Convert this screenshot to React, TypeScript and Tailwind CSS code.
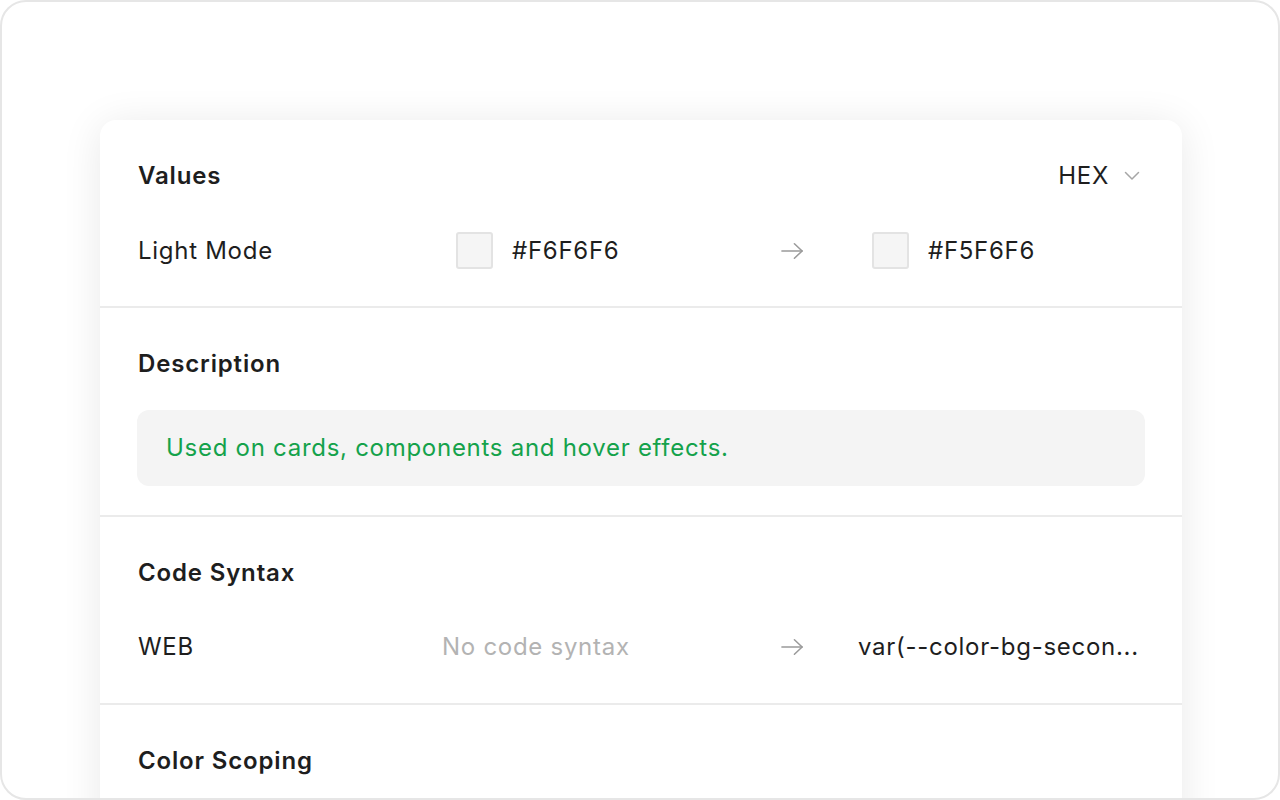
import type { ReactNode } from "react";

function Arrow() {
  return (
    <svg width="26" height="20" viewBox="0 0 26 20" fill="none" stroke="#9a9a9a" strokeWidth="1.6" strokeLinecap="round" strokeLinejoin="round">
      <path d="M2 10H23" />
      <path d="M15 2.5L23 10L15 17.5" />
    </svg>
  );
}

function Chevron() {
  return (
    <svg width="16" height="10" viewBox="0 0 16 10" fill="none" stroke="#a6a6a6" strokeWidth="1.5" strokeLinecap="round" strokeLinejoin="round">
      <path d="M1.5 1.5L8 8L14.5 1.5" />
    </svg>
  );
}

function Swatch({ hex }: { hex: string }) {
  return (
    <div className="ml-[14px] flex items-center gap-[19px]">
      <div className="h-[37px] w-[37px] rounded-[3px] border-2 border-[#e3e3e3] bg-[#f5f5f5]" />
      <span className="text-[#1e1e1e]">{hex}</span>
    </div>
  );
}

function Row({ label, left, right }: { label: string; left: ReactNode; right: ReactNode }) {
  return (
    <div className="grid h-[36px] grid-cols-[304px_338px_25px_1fr] items-center">
      <span className="text-[#1e1e1e]">{label}</span>
      <div className="flex items-center">{left}</div>
      <div className="flex items-center justify-center">
        <Arrow />
      </div>
      <div className="flex items-center pl-[53px] whitespace-nowrap">{right}</div>
    </div>
  );
}

function Title({ children }: { children: ReactNode }) {
  return <h2 className="h-[32px] leading-[32px] font-semibold tracking-[0.035em] text-[#1e1e1e]">{children}</h2>;
}

export default function App() {
  return (
    <div
      className="h-[800px] w-[1280px] overflow-hidden rounded-[26px] border-2 border-[#e6e6e6] bg-white text-[24px] leading-[32px] tracking-[0.03em]"
      style={{ fontFamily: "Inter, 'Noto Sans', sans-serif" }}
    >
      <div className="ml-[98px] mt-[118px] w-[1082px] rounded-t-[16px] bg-white shadow-[0_4px_40px_rgba(0,0,0,0.09)]">
        <section className="px-[38px] pb-[38px] pt-[40px]">
          <div className="flex items-center justify-between">
            <Title>Values</Title>
            <div className="flex items-center gap-[15px] pr-[4px] text-[#1e1e1e]">
              <span>HEX</span>
              <Chevron />
            </div>
          </div>
          <div className="mt-[40px]">
            <Row label="Light Mode" left={<Swatch hex="#F6F6F6" />} right={<Swatch hex="#F5F6F6" />} />
          </div>
        </section>
        <div className="h-[2px] bg-[#ebebeb]" />
        <section className="px-[37px] pb-[29px] pt-[40px]">
          <div className="pl-px">
            <Title>Description</Title>
          </div>
          <div className="mt-[30px] flex h-[76px] items-center rounded-[12px] bg-[#f4f4f4] px-[29px] text-[#14a24b]">
            Used on cards, components and hover effects.
          </div>
        </section>
        <div className="h-[2px] bg-[#ebebeb]" />
        <section className="px-[38px] pb-[38px] pt-[40px]">
          <Title>Code Syntax</Title>
          <div className="mt-[40px]">
            <Row
              label="WEB"
              left={<span className="text-[#b3b3b3]">No code syntax</span>}
              right={<span className="text-[#1e1e1e]">var(--color-bg-secon...</span>}
            />
          </div>
        </section>
        <div className="h-[2px] bg-[#ebebeb]" />
        <section className="px-[38px] pb-[38px] pt-[40px]">
          <Title>Color Scoping</Title>
          <div className="h-[120px]" />
        </section>
      </div>
    </div>
  );
}
